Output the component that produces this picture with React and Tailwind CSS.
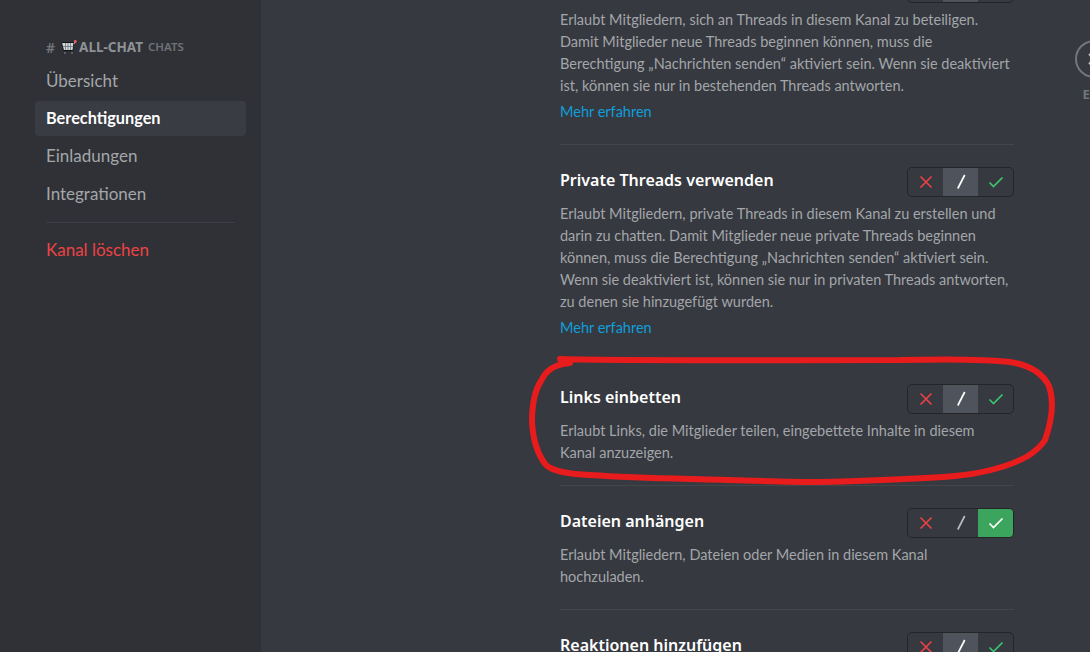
const F = { fontFamily: '"Noto Sans", sans-serif' };
const L = { fontFamily: 'Lato, sans-serif' };

function Toggle({ green }) {
  return (
    <div className="flex h-[30px] w-[107px] shrink-0 overflow-hidden rounded-[5px] border border-[#232529]">
      <div className="flex w-[35px] items-center justify-center">
        <svg width="16" height="16" viewBox="0 0 16 16"><path d="M2.5 2.5 L13.5 13.5 M13.5 2.5 L2.5 13.5" stroke="#ed4245" strokeWidth="1.6" fill="none" /></svg>
      </div>
      <div className={green ? "flex w-[35px] items-center justify-center" : "flex w-[35px] items-center justify-center bg-[#4f545c]"}>
        <svg width="12" height="16" viewBox="0 0 12 16"><path d="M9.7 1 L2.8 14.5" stroke={green ? "#b9bbbe" : "#ffffff"} strokeWidth="1.7" fill="none" /></svg>
      </div>
      <div className={green ? "flex w-[35px] items-center justify-center bg-[#3ba55d]" : "flex w-[35px] items-center justify-center"}>
        <svg width="16" height="14" viewBox="0 0 16 14"><path d="M1.5 7.5 L5.5 11.5 L14.5 2.5" stroke={green ? "#ffffff" : "#3cc46e"} strokeWidth="1.7" fill="none" /></svg>
      </div>
    </div>
  );
}

function Row({ title, lines, link, green, last, wide }) {
  const pad = last ? "pb-[22px] pt-[22px]" : wide ? "border-b border-[#42454a] pb-[22px] pt-[22px]" : "border-b border-[#42454a] pb-[21px] pt-[22px]";
  return (
    <div className={pad}>
      <div className="flex h-[30px] items-center justify-between">
        <div className="-mt-[4px] text-[16px] font-semibold leading-[22px] text-white">{title}</div>
        <Toggle green={green} />
      </div>
      <div style={L} className="mt-[6px] text-[14.5px] leading-[22px] text-[#a3a6aa]">
        {lines.map((l) => (
          <div key={l} className="whitespace-nowrap">{l}</div>
        ))}
      </div>
      {link && <div style={L} className="mt-[4px] text-[14.5px] leading-[22px] text-[#0f9fdc]">Mehr erfahren</div>}
    </div>
  );
}

function Item({ children, active, danger }) {
  const cls = active
    ? "bg-[#393c43] text-[16.3px] font-bold text-white"
    : danger
    ? "text-[17px] text-[#ed4245]"
    : "text-[17px] text-[#a3a6aa]";
  return <div style={L} className={"mb-[2.6px] flex h-[35px] items-center rounded-[4px] px-[11px] " + cls}>{children}</div>;
}

export default function App() {
  return (
    <div style={F} className="flex h-[652px] w-[1090px] overflow-hidden bg-[#36393f]">
      <div className="h-full w-[261px] shrink-0 bg-[#2f3136] pl-[35px] pr-[15px] pt-[38px]">
        <div className="flex h-[18px] items-center px-[11px] text-[13.5px] font-bold uppercase text-[#8e9297]">
          <span className="mr-[6px] text-[14px] font-semibold text-[#72767d]">#</span>
          <svg className="mr-[2px]" width="16" height="15" viewBox="0 0 16 15">
            <path d="M0.5 2.5 H13 L12 10.5 H2.5 Z" fill="#d4d8da" stroke="#141517" strokeWidth="1" />
            <path d="M4.5 3 V10 M7 3 V10 M9.5 3 V10 M1.5 6.5 H12.5" stroke="#6b7176" strokeWidth="0.8" />
            <circle cx="4" cy="13" r="1.5" fill="#6a6e73" stroke="#141517" strokeWidth="0.5" />
            <circle cx="11" cy="13" r="1.5" fill="#6a6e73" stroke="#141517" strokeWidth="0.5" />
            <path d="M13 4 L14 1.5" stroke="#b0b4b8" strokeWidth="1" />
            <circle cx="14.3" cy="1.5" r="1.4" fill="#ee5f5f" />
          </svg>
          <span>all-chat</span>
          <span className="ml-[5px] text-[11.5px] font-semibold text-[#6f7378]">chats</span>
        </div>
        <div className="mt-[7px]">
          <Item>Übersicht</Item>
          <Item active>Berechtigungen</Item>
          <Item>Einladungen</Item>
          <Item>Integrationen</Item>
        </div>
        <div className="mx-[11px] mt-[11px] h-px bg-[#3b3e44]" />
        <div className="mt-[9px]"><Item danger>Kanal löschen</Item></div>
      </div>
      <div className="flex flex-1 pl-[299px]">
        <div className="-mt-[49px] w-[454px] shrink-0">
          <Row
            title=""
            lines={[
              "Erlaubt Mitgliedern, sich an Threads in diesem Kanal zu beteiligen.",
              "Damit Mitglieder neue Threads beginnen können, muss die",
              "Berechtigung „Nachrichten senden“ aktiviert sein. Wenn sie deaktiviert",
              "ist, können sie nur in bestehenden Threads antworten.",
            ]}
            link
          />
          <Row
            wide
            title="Private Threads verwenden"
            lines={[
              "Erlaubt Mitgliedern, private Threads in diesem Kanal zu erstellen und",
              "darin zu chatten. Damit Mitglieder neue private Threads beginnen",
              "können, muss die Berechtigung „Nachrichten senden“ aktiviert sein.",
              "Wenn sie deaktiviert ist, können sie nur in privaten Threads antworten,",
              "zu denen sie hinzugefügt wurden.",
            ]}
            link
          />
          <Row
            title="Links einbetten"
            lines={[
              "Erlaubt Links, die Mitglieder teilen, eingebettete Inhalte in diesem",
              "Kanal anzuzeigen.",
            ]}
          />
          <Row
            title="Dateien anhängen"
            green
            lines={["Erlaubt Mitgliedern, Dateien oder Medien in diesem Kanal", "hochzuladen."]}
          />
          <Row title="Reaktionen hinzufügen" lines={[]} last />
        </div>
        <div className="ml-[61px] flex w-[38px] shrink-0 flex-col items-center pt-[40px]">
          <div className="flex h-[38px] w-[38px] shrink-0 items-center justify-center rounded-full border-2 border-[#72767d]">
            <svg width="18" height="18" viewBox="0 0 18 18"><path d="M4 4 L14 14 M14 4 L4 14" stroke="#b9bbbe" strokeWidth="2" /></svg>
          </div>
          <div className="mt-[7px] text-[13px] font-bold text-[#72767d]">ESC</div>
        </div>
      </div>
      <svg className="pointer-events-none absolute left-0 top-0" width="1090" height="652" viewBox="0 0 1090 652" fill="none">
        <path
          d="M560 359 C 640 361, 760 360, 900 360 C 945 359, 985 359, 1010 362 C 1030 365, 1043 374, 1049 386 C 1054 400, 1052 420, 1045 440 C 1040 448, 1034 452, 1028 456 C 1010 466, 985 473, 955 476 C 920 479, 860 481, 820 482 C 780 482, 740 480, 690 479 C 650 478, 620 477, 590 475 C 565 474, 553 471, 546 465 C 538 455, 533 440, 532 422 C 532 405, 535 390, 541 381 C 546 371, 552 365, 570 363"
          stroke="#e81c1c"
          strokeWidth="6"
          strokeLinecap="round"
          strokeLinejoin="round"
        />
      </svg>
    </div>
  );
}
